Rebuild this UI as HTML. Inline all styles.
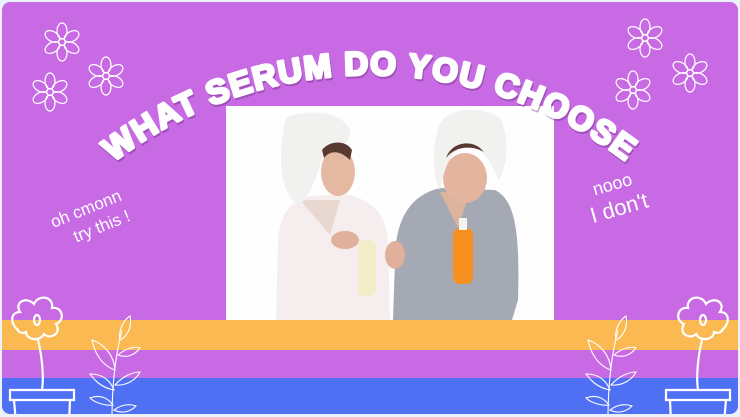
<!DOCTYPE html>
<html><head><meta charset="utf-8"><style>
html,body{margin:0;padding:0;background:#eaf1fb;width:740px;height:417px;overflow:hidden;}
body{position:relative;font-family:"Liberation Sans",sans-serif;}
svg{display:block}
</style></head><body>
<svg width="740" height="417" viewBox="0 0 740 417" style="position:absolute;left:0;top:0">
<defs>
<clipPath id="card"><rect x="2" y="2" width="736" height="412" rx="8"/></clipPath>
<g id="daisy" fill="none" stroke="#fff" stroke-width="1.2">
<circle r="3.5"/>
<ellipse cx="0" cy="-11" rx="5" ry="8"/>
<ellipse cx="0" cy="-11" rx="5" ry="8" transform="rotate(60)"/>
<ellipse cx="0" cy="-11" rx="5" ry="8" transform="rotate(120)"/>
<ellipse cx="0" cy="-11" rx="5" ry="8" transform="rotate(180)"/>
<ellipse cx="0" cy="-11" rx="5" ry="8" transform="rotate(240)"/>
<ellipse cx="0" cy="-11" rx="5" ry="8" transform="rotate(300)"/>
</g>
<g id="pot" fill="none" stroke="#fff" stroke-width="2.2">
<path d="M-22,-26 C-30,-32 -30,-44 -20,-44 C-26,-54 -14,-60 -6,-52 C-2,-62 14,-60 12,-48 C22,-50 26,-36 16,-32 C22,-22 10,-16 4,-22 C0,-14 -14,-16 -14,-24 C-18,-22 -22,-24 -22,-26Z"/>
<ellipse cx="-3" cy="-36" rx="3" ry="5"/>
<path d="M-2,-16 C2,0 4,20 2,34 M-30,34 L-30,44 L34,44 L34,34 Z M-26,44 L-22,90 M30,44 L28,90"/>
</g>
<g id="sprig" fill="none" stroke="#fff" stroke-width="1.1">
<path d="M0,90 C0,60 2,30 10,0"/>
<path d="M3,40 C-12,35 -18,20 -20,10 C-8,14 2,25 3,40Z"/>
<path d="M6,25 C14,18 24,16 28,18 C22,26 14,28 6,25Z"/>
<path d="M8,10 C6,0 12,-10 18,-14 C20,-4 16,6 8,10Z"/>
<path d="M2,60 C-10,58 -18,50 -22,44 C-10,44 -2,50 2,60Z"/>
<path d="M3,55 C12,45 22,42 28,42 C24,50 14,56 3,55Z"/>
<path d="M1,75 C-8,76 -18,72 -22,68 C-12,64 -4,68 1,75Z"/>
<path d="M2,80 C10,74 18,74 24,76 C18,82 10,84 2,80Z"/>
</g>
<path id="arc" d="M60,211 A421,421 0 0 1 680,211"/>
</defs>
<g clip-path="url(#card)">
<rect x="0" y="0" width="740" height="320" fill="#c86ae4"/>
<rect x="0" y="320" width="740" height="30" fill="#fbb952"/>
<rect x="0" y="350" width="740" height="28" fill="#c86ae4"/>
<rect x="0" y="378" width="740" height="40" fill="#5070f4"/>
<rect x="226" y="106" width="328" height="214" fill="#fefefe"/>
<path d="M276,320 L278,240 C280,215 290,200 310,196 L345,194 C370,200 385,210 388,240 L390,320Z" fill="#f6eeee"/>
<path d="M300,200 L330,235 L340,200Z" fill="#e9d8d0"/>
<ellipse cx="338" cy="172" rx="17" ry="24" fill="#e5b8a2"/>
<path d="M286,118 C300,110 340,108 350,130 C352,145 335,150 325,148 C318,175 310,195 300,205 C285,200 274,170 286,118Z" fill="#f1f1ef"/>
<path d="M322,150 C330,140 346,140 352,150 L350,160 C340,150 330,150 324,158Z" fill="#5a3a30"/>
<ellipse cx="345" cy="240" rx="14" ry="9" fill="#e0b09a"/>
<rect x="358" y="240" width="18" height="56" rx="6" fill="#f3ecc8"/>
<path d="M393,320 L395,260 C395,220 410,195 440,188 L495,190 C515,200 520,230 518,300 L512,320Z" fill="#a4a9b3"/>
<path d="M440,192 L458,228 L470,192Z" fill="#dcb39c"/>
<ellipse cx="465" cy="178" rx="22" ry="25" fill="#e3b59f"/>
<path d="M438,130 C440,108 480,104 500,118 C512,140 505,175 498,180 C492,160 480,148 470,145 C455,145 446,160 440,190 C432,175 432,150 438,130Z" fill="#f1f1ef"/>
<path d="M446,158 C455,146 472,145 484,152 L480,148 C470,140 452,142 446,158Z" fill="#5a3a30"/>
<ellipse cx="395" cy="255" rx="10" ry="14" fill="#e0b09a"/>
<rect x="453" y="228" width="20" height="56" rx="7" fill="#f7901f"/>
<rect x="459" y="218" width="8" height="12" fill="#f4f4f4"/>
<use href="#daisy" x="62" y="42"/>
<use href="#daisy" x="106" y="76"/>
<use href="#daisy" x="50" y="92"/>
<use href="#daisy" x="645" y="38"/>
<use href="#daisy" x="690" y="73"/>
<use href="#daisy" x="633" y="90"/>
<use href="#pot" x="40" y="356"/>
<use href="#pot" x="700" y="356" transform="translate(1400,0) scale(-1,1)"/>
<use href="#sprig" x="112" y="330"/>
<use href="#sprig" x="608" y="330"/>
<text font-family="Liberation Sans,sans-serif" font-weight="900" font-size="33" fill="#fff" stroke="#fff" stroke-width="3" stroke-linejoin="round" letter-spacing="1.5" style="filter:drop-shadow(1px 2px 0 rgba(90,30,110,.35))"><textPath href="#arc" startOffset="50%" text-anchor="middle">WHAT SERUM DO YOU CHOOSE</textPath></text>
<text transform="translate(88,214) rotate(-22)" font-family="Liberation Sans,sans-serif" font-size="17" fill="#fff" text-anchor="middle"><tspan x="0" y="0">oh cmonn</tspan><tspan x="8" y="22">try this !</tspan></text>
<text transform="translate(614,190) rotate(-16)" font-family="Liberation Sans,sans-serif" font-size="18" fill="#fff" text-anchor="middle"><tspan x="0" y="0">nooo</tspan><tspan x="0" y="26" font-size="22">I don't</tspan></text>
</g>
</svg>
</body></html>
